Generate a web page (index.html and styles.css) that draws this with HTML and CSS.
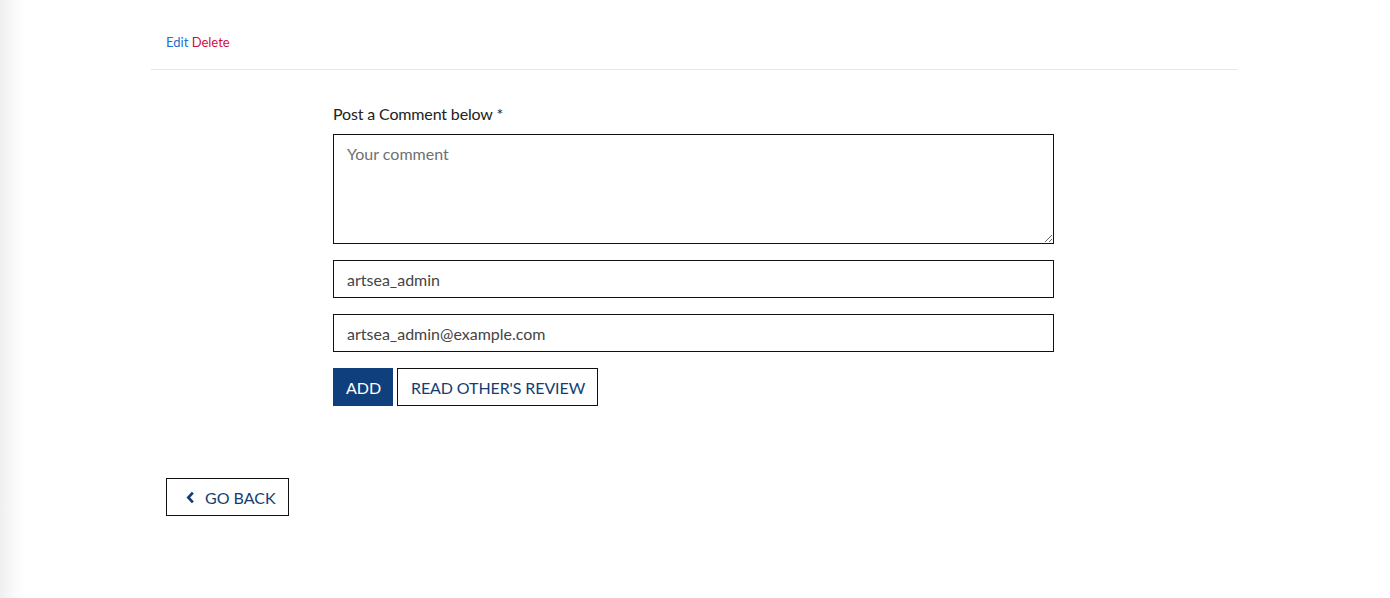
FILE: index.html
```html
<!DOCTYPE html>
<html>
<head>
<meta charset="utf-8">
<link rel="stylesheet" href="styles.css">
</head>
<body>
<div class="page">
  <div class="actions">
    <a class="edit" href="#">Edit</a> <a class="delete" href="#">Delete</a>
  </div>
  <div class="comment">
    <form class="form">
      <label class="label">Post a Comment below *</label>
      <textarea class="field area" placeholder="Your comment"></textarea>
      <input class="field input" type="text" value="artsea_admin">
      <input class="field input" type="text" value="artsea_admin@example.com">
      <div class="buttons">
        <button type="button" class="btn primary">ADD</button>
        <button type="button" class="btn outline">READ OTHER'S REVIEW</button>
      </div>
    </form>
  </div>
  <div class="back-row">
    <a class="btn outline back" href="#">
      <svg class="chev" viewBox="0 0 10 14" width="9" height="13"><path d="M7.6 1.6 L2.6 7 L7.6 12.4" fill="none" stroke="currentColor" stroke-width="3" stroke-linejoin="miter"/></svg>
      GO BACK
    </a>
  </div>
</div>
</body>
</html>
```
FILE: styles.css
```css
html, body {
  margin: 0;
  padding: 0;
}
body {
  font-family: Lato, "Open Sans", sans-serif;
  color: #222;
  background: linear-gradient(to right, #efefef 0px, #fafafa 14px, #ffffff 26px);
  min-height: 598px;
}
.page {
  width: 1086px;
  margin: 0 auto;
  padding-top: 35px;
  position: relative;
  left: -1px;
}
.actions {
  padding: 0 15px 19px;
  font-size: 13px;
  line-height: 15px;
  border-bottom: 1px solid #e6e6e6;
}
.actions a { text-decoration: none; }
.edit { color: #1c6fd1; }
.delete { color: #d0103f; }
.comment {
  display: flex;
  justify-content: center;
  padding-top: 34px;
}
.form {
  width: 721px;
  display: flex;
  flex-direction: column;
  margin-left: -1px;
}
.label {
  font-size: 16px;
  line-height: 19px;
  color: #222;
  letter-spacing: -0.15px;
  margin-bottom: 11px;
}
.field {
  box-sizing: border-box;
  width: 100%;
  border: 1px solid #111;
  border-radius: 0;
  font-family: Lato, "Open Sans", sans-serif;
  font-size: 16px;
  color: #444;
  padding: 0 13px;
  margin: 0 0 16px;
  outline: none;
  background: #fff;
}
.area {
  height: 110px;
  padding-top: 9px;
  resize: vertical;
}
.area::placeholder { color: #707070; }
.input {
  height: 38px;
}
.buttons {
  display: flex;
  gap: 4px;
}
.btn {
  box-sizing: border-box;
  height: 38px;
  font-family: Lato, "Open Sans", sans-serif;
  font-size: 16px;
  border-radius: 0;
  padding: 0 12px 0 13px;
  display: inline-flex;
  align-items: center;
  cursor: pointer;
  text-decoration: none;
}
.buttons .outline { letter-spacing: -0.1px; }
.primary {
  background: #0f3f7d;
  color: #fff;
  border: 1px solid #0f3f7d;
  width: 60px;
  justify-content: center;
}
.outline {
  background: #fff;
  color: #143e72;
  border: 1px solid #111;
}
.back-row {
  padding: 72px 15px 0;
}
.back {
  width: 123px;
  padding: 0 0 0 19px;
  gap: 10px;
}
.chev { display: block; color: #143e72; }
```
